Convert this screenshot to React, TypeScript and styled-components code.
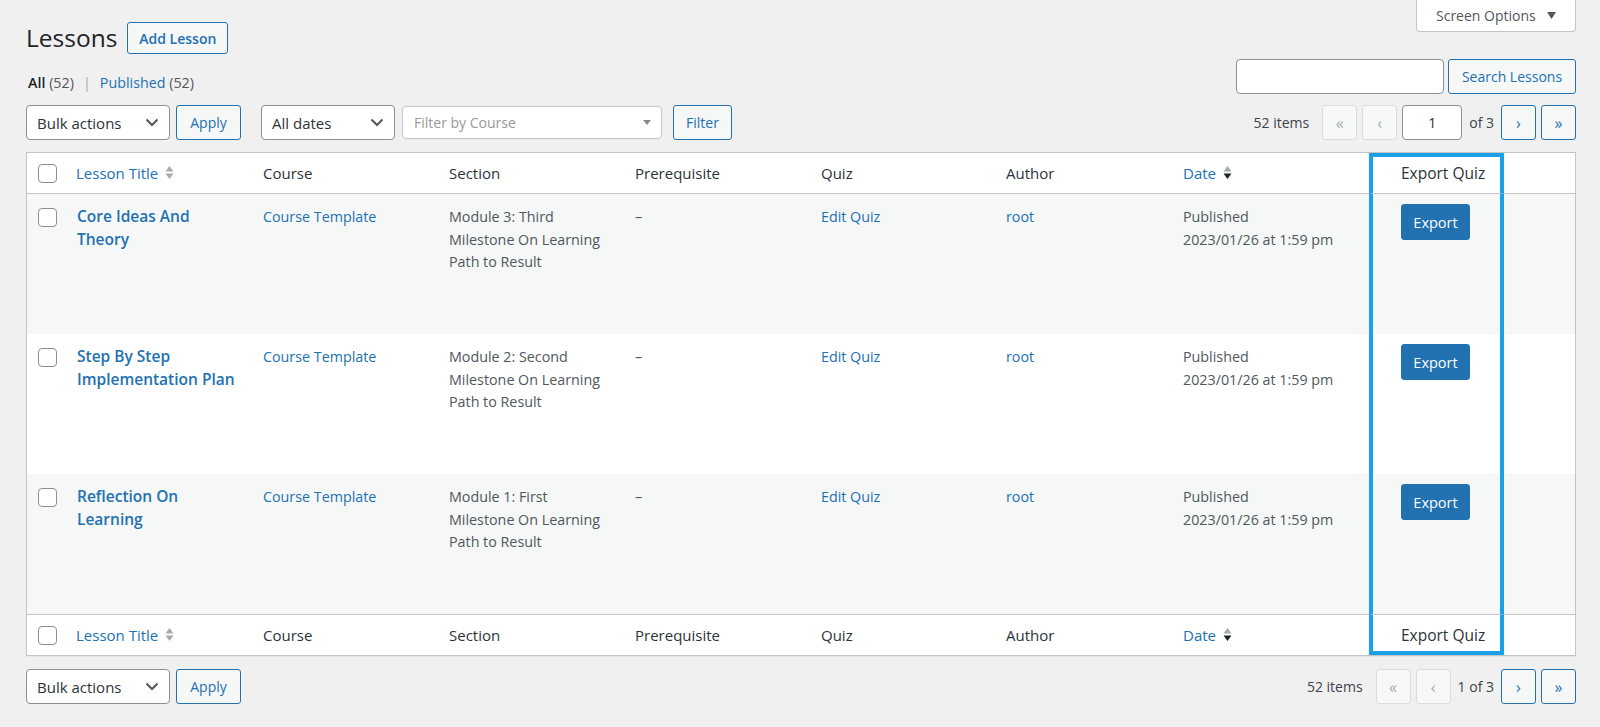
import React from "react";
import styled, { createGlobalStyle } from "styled-components";

const GlobalStyle = createGlobalStyle`
  html, body { margin: 0; padding: 0; background: #f0f0f1; }
  body {
    font-family: "Open Sans", "Noto Sans", sans-serif;
    font-size: 14px;
    color: #3c434a;
  }
  * { box-sizing: border-box; }
`;

const BLUE = "#2271b1";
const HIGHLIGHT = "#1ba1e6";

const Page = styled.div`
  padding: 0 24px 0 26px;
  min-height: 727px;
`;

const Header = styled.div`
  display: flex;
  justify-content: space-between;
  align-items: flex-start;
`;

const HeaderLeft = styled.div`
  display: flex;
  flex-direction: column;
  padding-top: 22px;
`;

const TitleRow = styled.div`
  display: flex;
  align-items: center;
  gap: 10px;
`;

const Title = styled.h1`
  margin: 0;
  font-size: 24.5px;
  font-weight: 400;
  line-height: 32px;
  color: #1d2327;
`;

const OutlineButton = styled.button<{ $w?: number; $h?: number; $bold?: boolean; $ml?: number }>`
  width: ${(p) => (p.$w ? `${p.$w}px` : "auto")};
  height: ${(p) => p.$h ?? 35}px;
  margin-left: ${(p) => p.$ml ?? 0}px;
  padding: 0 10px;
  border: 1px solid ${BLUE};
  border-radius: 3px;
  background: #f6f7f7;
  color: ${BLUE};
  font-family: inherit;
  font-size: 14px;
  font-weight: ${(p) => (p.$bold ? 600 : 400)};
  cursor: pointer;
  white-space: nowrap;
`;

const SubNav = styled.div`
  margin-top: 18px;
  margin-left: 2px;
  line-height: 22px;
  font-size: 14.3px;
  color: #50575e;
  display: flex;
  gap: 4px;
`;

const Current = styled.span`
  color: #1d2327;
  font-weight: 600;
`;

const NavLink = styled.a`
  color: ${BLUE};
  text-decoration: none;
`;

const Sep = styled.span`
  color: #a7aaad;
  margin: 0 5px;
`;

const HeaderRight = styled.div`
  display: flex;
  flex-direction: column;
  align-items: flex-end;
`;

const ScreenOptions = styled.button`
  height: 32px;
  width: 160px;
  padding: 0 19px;
  border: 1px solid #c3c4c7;
  border-top: none;
  border-radius: 0 0 4px 4px;
  background: #fff;
  color: #50575e;
  font-family: inherit;
  font-size: 14px;
  display: flex;
  align-items: center;
  justify-content: space-between;
`;

const SearchRow = styled.div`
  margin-top: 27px;
  display: flex;
  gap: 4px;
`;

const TextInput = styled.input<{ $w: number; $center?: boolean }>`
  width: ${(p) => p.$w}px;
  height: 35px;
  border: 1px solid #8c8f94;
  border-radius: 4px;
  background: #fff;
  font-family: inherit;
  font-size: 14px;
  color: #2c3338;
  text-align: ${(p) => (p.$center ? "center" : "left")};
  padding: 0 8px;
`;

const Toolbar = styled.div<{ $mt: number }>`
  margin-top: ${(p) => p.$mt}px;
  height: 35px;
  display: flex;
  justify-content: space-between;
  align-items: center;
`;

const ToolGroup = styled.div<{ $gap: number }>`
  display: flex;
  align-items: center;
  gap: ${(p) => p.$gap}px;
`;

const SelectBox = styled.div<{ $w: number }>`
  width: ${(p) => p.$w}px;
  height: 35px;
  border: 1px solid #8c8f94;
  border-radius: 4px;
  background: #fff;
  display: flex;
  align-items: center;
  justify-content: space-between;
  padding: 0 10px 0 10px;
  color: #2c3338;
  font-size: 15px;
`;

const ComboBox = styled.div`
  width: 260px;
  height: 33px;
  border: 1px solid #c3c4c7;
  border-radius: 4px;
  background: #fff;
  display: flex;
  align-items: center;
  justify-content: space-between;
  padding: 0 10px 0 11px;
  color: #999;
  font-size: 14px;
`;

const PageInfo = styled.span<{ $mr: number }>`
  color: #3c434a;
  font-size: 14px;
  margin-right: ${(p) => p.$mr}px;
`;

const PageButton = styled.button<{ $disabled?: boolean }>`
  width: 35px;
  height: 35px;
  padding: 0;
  border: 1px solid ${(p) => (p.$disabled ? "#dcdcde" : BLUE)};
  border-radius: 3px;
  background: #f6f7f7;
  color: ${(p) => (p.$disabled ? "#a7aaad" : BLUE)};
  font-family: inherit;
  font-size: 16px;
  line-height: 1;
`;

const Pager = styled.div`
  display: flex;
  align-items: center;
  gap: 5px;
`;

const PagerText = styled.span<{ $mx: number }>`
  color: #3c434a;
  font-size: 14px;
  margin: 0 ${(p) => p.$mx}px;
`;

const Table = styled.table`
  width: 1550px;
  margin-top: 12px;
  border: 1px solid #c3c4c7;
  border-spacing: 0;
  border-collapse: separate;
  table-layout: fixed;
  background: #fff;
  box-shadow: 0 1px 1px rgba(0, 0, 0, 0.04);
`;

const Th = styled.th<{ $foot?: boolean; $export?: boolean; $check?: boolean }>`
  text-align: left;
  font-weight: 400;
  font-size: ${(p) => (p.$export ? 15.5 : 15)}px;
  line-height: 24px;
  color: #2c3338;
  vertical-align: middle;
  padding: 8px 10px;
  padding-left: ${(p) => (p.$check ? 11 : p.$export ? 28 : 10)}px;
  white-space: nowrap;
  border-bottom: ${(p) => (p.$foot ? "none" : "1px solid #c3c4c7")};
  border-top: ${(p) => (p.$foot ? "1px solid #c3c4c7" : "none")};
  ${(p) =>
    p.$export &&
    `
    border-left: 4px solid ${HIGHLIGHT};
    border-right: 4px solid ${HIGHLIGHT};
    ${p.$foot ? `border-bottom: 4px solid ${HIGHLIGHT}; padding-bottom: 4px;` : `border-top: 4px solid ${HIGHLIGHT}; padding-top: 4px;`}
  `}
`;

const SortLink = styled.a`
  color: ${BLUE};
  text-decoration: none;
  display: inline-flex;
  align-items: center;
  gap: 7px;
`;

const Row = styled.tr<{ $alt: boolean }>`
  height: 140px;
  background: ${(p) => (p.$alt ? "#f6f7f7" : "#fff")};
`;

const Td = styled.td<{ $check?: boolean; $export?: boolean; $pr?: number }>`
  vertical-align: top;
  padding: ${(p) => (p.$check ? "14px 0 0 11px" : p.$export ? "10px 0 0 28px" : `12px ${p.$pr ?? 10}px 0 10px`)};
  font-size: 14.3px;
  line-height: 22.5px;
  color: #50575e;
  ${(p) =>
    p.$export &&
    `
    border-left: 4px solid ${HIGHLIGHT};
    border-right: 4px solid ${HIGHLIGHT};
  `}
`;

const RowTitle = styled.a`
  display: block;
  font-size: 15.5px;
  font-weight: 600;
  line-height: 23px;
  color: ${BLUE};
  text-decoration: none;
  margin-top: -1px;
  margin-left: 1px;
`;

const CellLink = styled.a`
  color: ${BLUE};
  text-decoration: none;
`;

const Checkbox = styled.input.attrs({ type: "checkbox" })`
  appearance: none;
  display: block;
  margin: 0;
  width: 19px;
  height: 19px;
  border: 1px solid #8c8f94;
  border-radius: 4px;
  background: #fff;
`;

const ExportButton = styled.button`
  width: 69px;
  height: 36px;
  padding: 0;
  border: 1px solid ${BLUE};
  border-radius: 3px;
  background: ${BLUE};
  color: #fff;
  font-family: inherit;
  font-size: 14.5px;
`;

const Chevron = () => (
  <svg width="14" height="9" viewBox="0 0 14 9">
    <path d="M1.5 1.5 L7 7 L12.5 1.5" fill="none" stroke="#50575e" strokeWidth="2" />
  </svg>
);

const SmallTriangle = ({ color, w = 8, h = 5 }: { color: string; w?: number; h?: number }) => (
  <svg width={w} height={h} viewBox={`0 0 ${w} ${h}`}>
    <path d={`M0 0 L${w} 0 L${w / 2} ${h} Z`} fill={color} />
  </svg>
);

const SortIcon = ({ up, down }: { up: string; down: string }) => (
  <svg width="9" height="16" viewBox="0 0 9 16">
    <path d="M0.5 6.5 L4.5 1 L8.5 6.5 Z" fill={up} />
    <path d="M0.5 8.5 L4.5 14 L8.5 8.5 Z" fill={down} />
  </svg>
);

const columns = [39, 187, 186, 186, 186, 185, 177, 196, 135, 71];

type Lesson = { title: string; section: string };
const lessons: Lesson[] = [
  { title: "Core Ideas And Theory", section: "Module 3: Third Milestone On Learning Path to Result" },
  { title: "Step By Step Implementation Plan", section: "Module 2: Second Milestone On Learning Path to Result" },
  { title: "Reflection On Learning", section: "Module 1: First Milestone On Learning Path to Result" },
];

const HeadRow = ({ foot }: { foot?: boolean }) => (
  <tr>
    <Th $foot={foot} $check>
      <Checkbox />
    </Th>
    <Th $foot={foot}>
      <SortLink>
        Lesson Title <SortIcon up="#a7aaad" down="#a7aaad" />
      </SortLink>
    </Th>
    <Th $foot={foot}>Course</Th>
    <Th $foot={foot}>Section</Th>
    <Th $foot={foot}>Prerequisite</Th>
    <Th $foot={foot}>Quiz</Th>
    <Th $foot={foot}>Author</Th>
    <Th $foot={foot}>
      <SortLink>
        Date <SortIcon up="#a7aaad" down="#1d2327" />
      </SortLink>
    </Th>
    <Th $foot={foot} $export>
      Export Quiz
    </Th>
    <Th $foot={foot} />
  </tr>
);

const BulkActions = () => (
  <ToolGroup $gap={6}>
    <SelectBox $w={144}>
      <span>Bulk actions</span>
      <Chevron />
    </SelectBox>
    <OutlineButton $w={65}>Apply</OutlineButton>
  </ToolGroup>
);

export default function App() {
  return (
    <Page>
      <GlobalStyle />
      <Header>
        <HeaderLeft>
          <TitleRow>
            <Title>Lessons</Title>
            <OutlineButton $w={101} $h={32} $bold>
              Add Lesson
            </OutlineButton>
          </TitleRow>
          <SubNav>
            <span>
              <Current>All</Current> (52)
            </span>
            <Sep>|</Sep>
            <span>
              <NavLink>Published</NavLink> (52)
            </span>
          </SubNav>
        </HeaderLeft>
        <HeaderRight>
          <ScreenOptions>
            <span>Screen Options</span>
            <SmallTriangle color="#50575e" w={9} h={7} />
          </ScreenOptions>
          <SearchRow>
            <TextInput $w={208} />
            <OutlineButton $w={128}>Search Lessons</OutlineButton>
          </SearchRow>
        </HeaderRight>
      </Header>

      <Toolbar $mt={11}>
        <ToolGroup $gap={20}>
          <BulkActions />
          <ToolGroup $gap={7}>
            <SelectBox $w={134}>
              <span>All dates</span>
              <Chevron />
            </SelectBox>
            <ComboBox>
              <span>Filter by Course</span>
              <SmallTriangle color="#888" w={8} h={5} />
            </ComboBox>
            <OutlineButton $w={59} $ml={4}>
              Filter
            </OutlineButton>
          </ToolGroup>
        </ToolGroup>
        <Pager>
          <PageInfo $mr={8}>52 items</PageInfo>
          <PageButton $disabled>«</PageButton>
          <PageButton $disabled>‹</PageButton>
          <TextInput $w={60} $center defaultValue="1" />
          <PagerText $mx={2}>of 3</PagerText>
          <PageButton>›</PageButton>
          <PageButton>»</PageButton>
        </Pager>
      </Toolbar>

      <Table>
        <colgroup>
          {columns.map((w, i) => (
            <col key={i} style={{ width: w }} />
          ))}
        </colgroup>
        <thead>
          <HeadRow />
        </thead>
        <tbody>
          {lessons.map((l, i) => (
            <Row key={l.title} $alt={i % 2 === 0}>
              <Td $check>
                <Checkbox />
              </Td>
              <Td $pr={17}>
                <RowTitle>{l.title}</RowTitle>
              </Td>
              <Td>
                <CellLink>Course Template</CellLink>
              </Td>
              <Td $pr={14}>{l.section}</Td>
              <Td>–</Td>
              <Td>
                <CellLink>Edit Quiz</CellLink>
              </Td>
              <Td>
                <CellLink>root</CellLink>
              </Td>
              <Td>
                Published
                <br />
                2023/01/26 at 1:59 pm
              </Td>
              <Td $export>
                <ExportButton>Export</ExportButton>
              </Td>
              <Td />
            </Row>
          ))}
        </tbody>
        <tfoot>
          <HeadRow foot />
        </tfoot>
      </Table>

      <Toolbar $mt={13}>
        <BulkActions />
        <Pager>
          <PageInfo $mr={8}>52 items</PageInfo>
          <PageButton $disabled>«</PageButton>
          <PageButton $disabled>‹</PageButton>
          <PagerText $mx={2}>1 of 3</PagerText>
          <PageButton>›</PageButton>
          <PageButton>»</PageButton>
        </Pager>
      </Toolbar>
    </Page>
  );
}
